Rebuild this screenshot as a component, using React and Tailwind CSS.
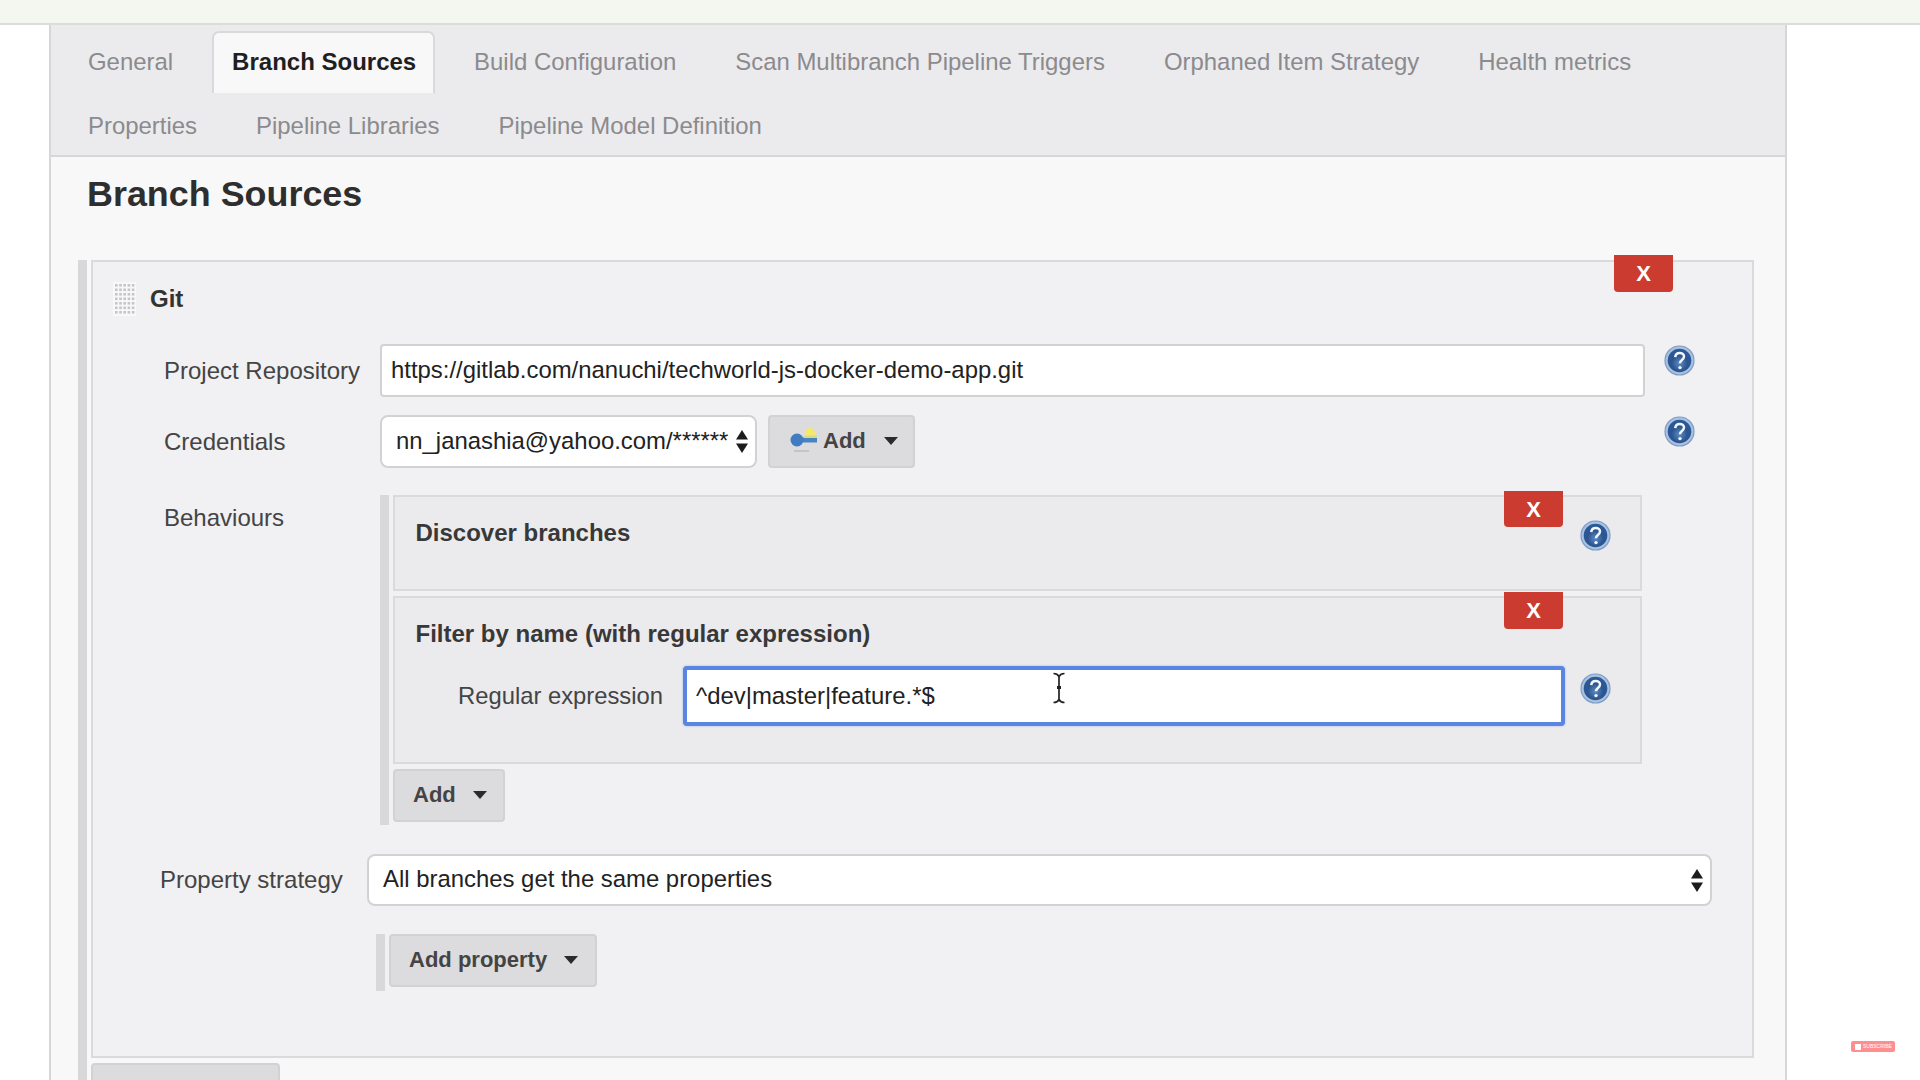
import { useId } from 'react'

const tabsTop = ['General', 'Branch Sources', 'Build Configuration', 'Scan Multibranch Pipeline Triggers', 'Orphaned Item Strategy', 'Health metrics']
const tabsBottom = ['Properties', 'Pipeline Libraries', 'Pipeline Model Definition']

function HelpIcon({ className }) {
  const id = useId()
  return (
    <svg className={className} width="31" height="31" viewBox="0 0 31 31">
      <defs>
        <radialGradient id={id} cx="50%" cy="62%" r="60%">
          <stop offset="0%" stopColor="#5d8bc4" />
          <stop offset="55%" stopColor="#2c5590" />
          <stop offset="100%" stopColor="#2a5a9a" />
        </radialGradient>
      </defs>
      <circle cx="15.5" cy="15.5" r="14.5" fill="#a9c2e2" stroke="#7f9cc4" strokeWidth="1.2" />
      <circle cx="15.5" cy="15.5" r="11.8" fill={`url(#${id})`} />
      <path d="M11.2 12.2c0.3-2.8 2.2-4.2 4.5-4.2 2.5 0 4.3 1.5 4.3 3.6 0 1.8-1.1 2.7-2.3 3.6-1.1 0.8-1.7 1.5-1.7 3" fill="none" stroke="#f2f5fa" strokeWidth="2.5" />
      <circle cx="16" cy="22.6" r="1.7" fill="#f2f5fa" />
    </svg>
  )
}

function Caret({ className }) {
  return (
    <svg className={className} width="14" height="8" viewBox="0 0 14 8">
      <path d="M0 0h14L7 8z" fill="#2b2b2b" />
    </svg>
  )
}

function UpDown({ className }) {
  return (
    <svg className={className} width="12" height="23" viewBox="0 0 12 23">
      <path d="M6 0l6 9.5H0z" fill="#1c1c1c" />
      <path d="M6 23l6-9.5H0z" fill="#1c1c1c" />
    </svg>
  )
}

function KeyIcon() {
  return (
    <svg width="28" height="28" viewBox="0 0 28 28">
      <circle cx="20" cy="6" r="5" fill="#f3ea6a" />
      <rect x="8" y="10.5" width="19" height="5" fill="#4a84c0" />
      <rect x="14" y="8.5" width="13" height="2.5" fill="#d9d98a" />
      <circle cx="7" cy="13" r="6.5" fill="#3f7cc0" />
      <rect x="4" y="23" width="15" height="2" fill="#c4c4c8" />
    </svg>
  )
}

function Grip() {
  const dots = []
  for (let r = 0; r < 7; r++) {
    for (let c = 0; c < 5; c++) {
      dots.push(<rect key={r + '-' + c} x={2 + c * 4.2} y={2 + r * 4.5} width="2.6" height="2.6" fill="#c6c6c9" />)
    }
  }
  return (
    <svg width="23" height="34" viewBox="0 0 23 34">
      <rect width="23" height="34" fill="#f8f8f9" />
      {dots}
    </svg>
  )
}

function DeleteButton({ className }) {
  return (
    <div className={`absolute w-[59px] flex items-center justify-center bg-[#cb3b30] rounded-b-[4px] text-white font-bold text-[22px] ${className}`}>
      X
    </div>
  )
}

function AddButton({ children, className, icon }) {
  return (
    <div className={`h-[53px] flex items-center pb-[2px] bg-[#dcdbde] border-2 border-[#d2d1d4] rounded-[4px] text-[22px] font-bold text-[#444] ${className}`}>
      {icon}
      {children}
    </div>
  )
}

function Tab({ label, active }) {
  if (active) {
    return (
      <div className="w-[223px] h-[62px] mt-[-1px] px-[18px] pt-[14px] leading-[30px] bg-[#f8f8f9] border-2 border-b-0 border-[#d9d9db] rounded-t-[7px] text-[24px] font-bold text-[#1f1f1f] whitespace-nowrap">
        {label}
      </div>
    )
  }
  return <div className="h-[61px] px-[20px] pt-[15px] leading-[30px] text-[23.93px] text-[#8b8b8d] whitespace-nowrap">{label}</div>
}

export default function App() {
  return (
    <div className="w-[1920px] h-[1080px] overflow-hidden relative flex flex-col bg-white font-['Liberation_Sans',Arial,sans-serif]">
      <div className="h-[25px] shrink-0 bg-[#f4f7f0] border-b-2 border-[#dcdcdc]" />

      <div className="flex-1 ml-[49px] w-[1738px] border-x-2 border-[#d7d6d9] bg-[#f8f8f9]">
        <div className="h-[132px] pt-[7px] pl-[17px] bg-[#ebeaed] border-b-2 border-[#d7d6d9]">
          <div className="flex h-[64px] gap-[19px]">
            {tabsTop.map((t) => <Tab key={t} label={t} active={t === 'Branch Sources'} />)}
          </div>
          <div className="flex gap-[19px]">
            {tabsBottom.map((t) => <Tab key={t} label={t} />)}
          </div>
        </div>

        <h1 className="ml-[36px] mt-[15px] h-[44px] leading-[44px] text-[35.9px] font-bold text-[#2e2e2e]">Branch Sources</h1>

        <div className="flex ml-[27px] mt-[44px] gap-[4px]">
          <div className="w-[9px] bg-[#d8d7da]" />
          <div>
            <div className="relative w-[1663px] h-[798px] bg-[#f1f0f2] border-2 border-[#dadadc]">
              <DeleteButton className="right-[79px] top-[-7px] h-[37px]" />

              <div className="flex items-center ml-[20px] mt-[20px] h-[34px] gap-[14px]">
                <Grip />
                <span className="text-[24px] font-bold text-[#333]">Git</span>
              </div>

              <div className="flex items-start ml-[71px] mt-[28px]">
                <div className="w-[216px] h-[53px] flex items-center text-[24px] text-[#444]">Project Repository</div>
                <div className="w-[1265px] h-[53px] flex items-center pl-[9px] pb-[1px] bg-white border-2 border-[#d2d2d4] rounded-[4px] text-[23.9px] text-[#222]">
                  https://gitlab.com/nanuchi/techworld-js-docker-demo-app.git
                </div>
                <HelpIcon className="ml-[19px] mt-[1px]" />
              </div>

              <div className="flex items-start ml-[71px] mt-[18px]">
                <div className="w-[216px] h-[53px] flex items-center text-[24px] text-[#444]">Credentials</div>
                <div className="w-[377px] h-[53px] flex items-center justify-between pl-[14px] pr-[7px] pb-[1px] bg-white border-2 border-[#d2d2d4] rounded-[8px] text-[23.9px] text-[#222] whitespace-nowrap">
                  nn_janashia@yahoo.com/******
                  <UpDown />
                </div>
                <div className="ml-[11px]">
                  <AddButton className="w-[147px] pl-[20px]" icon={<span className="mr-[5px] flex"><KeyIcon /></span>}>
                    Add
                    <Caret className="ml-[18px]" />
                  </AddButton>
                </div>
                <HelpIcon className="ml-[749px] mt-[1px]" />
              </div>

              <div className="flex items-start ml-[71px] mt-[27px]">
                <div className="w-[216px] h-[46px] flex items-center text-[24px] text-[#444]">Behaviours</div>
                <div className="flex gap-[4px]">
                  <div className="w-[9px] bg-[#d8d7da]" />
                  <div className="pb-[3px]">
                    <div className="relative w-[1249px] h-[96px] flex justify-between items-start pl-[20.5px] pr-[29px] pt-[22px] bg-[#ebeaed] border-2 border-[#dadadc]">
                      <span className="leading-[28px] text-[24px] font-bold text-[#383838]">Discover branches</span>
                      <HelpIcon className="mt-[1px]" />
                      <DeleteButton className="right-[77px] top-[-6px] h-[36px]" />
                    </div>
                    <div className="relative w-[1249px] h-[168px] mt-[5px] pl-[20.5px] pt-[22px] bg-[#ebeaed] border-2 border-[#dadadc]">
                      <div className="leading-[28px] text-[24px] font-bold text-[#383838]">Filter by name (with regular expression)</div>
                      <DeleteButton className="right-[77px] top-[-6px] h-[37px]" />
                      <div className="flex items-start ml-[42.5px] mt-[18px]">
                        <div className="w-[225px] h-[60px] flex items-center text-[23.8px] text-[#444]">Regular expression</div>
                        <div className="relative w-[882px] h-[60px] flex items-center pl-[9px] bg-white border-[4px] border-[#5a86e2] rounded-[4px] shadow-[0_0_2px_#8fb0f0] text-[23.9px] text-[#222]">
                          ^dev|master|feature.*$
                          <svg className="absolute left-[365px] top-[2px]" width="14" height="32" viewBox="0 0 14 32">
                            <path d="M1.5 1.5c2.5 0 4.5 1 5.5 3 1-2 3-3 5.5-3M7 4.5v23M1.5 30.5c2.5 0 4.5-1 5.5-3 1 2 3 3 5.5 3" fill="none" stroke="#222" strokeWidth="1.7" />
                            <rect x="5" y="14" width="4" height="3" fill="#222" />
                          </svg>
                        </div>
                        <HelpIcon className="ml-[15px] mt-[7px]" />
                      </div>
                    </div>
                    <div className="mt-[5px]">
                      <AddButton className="w-[112px] pl-[18px]">
                        Add
                        <Caret className="ml-[17px]" />
                      </AddButton>
                    </div>
                  </div>
                </div>
              </div>

              <div className="flex items-start ml-[67px] mt-[29px]">
                <div className="w-[207px] h-[52px] flex items-center text-[24px] text-[#444]">Property strategy</div>
                <div className="w-[1345px] h-[52px] flex items-center justify-between pl-[14px] pr-[7px] bg-white border-2 border-[#d2d2d4] rounded-[8px] text-[23.9px] text-[#222]">
                  <span className="mb-[2px]">All branches get the same properties</span>
                  <UpDown />
                </div>
              </div>

              <div className="flex ml-[283px] mt-[28px] gap-[4px]">
                <div className="w-[9px] h-[57px] bg-[#d8d7da]" />
                <AddButton className="w-[208px] pl-[18px]">
                  Add property
                  <Caret className="ml-[17px]" />
                </AddButton>
              </div>
            </div>
            <div className="w-[189px] h-[40px] mt-[5px] bg-[#dcdbde] border-2 border-[#d2d1d4] rounded-[4px]" />
          </div>
        </div>
      </div>

      <div className="absolute left-[1851px] top-[1041px] w-[44px] h-[11px] flex items-center gap-[2px] pl-[4px] bg-[#ff8e8e] rounded-[2px] text-[5px] leading-none text-white whitespace-nowrap">
        <span className="w-[6px] h-[6px] bg-white" />
        SUBSCRIBE
      </div>
    </div>
  )
}
